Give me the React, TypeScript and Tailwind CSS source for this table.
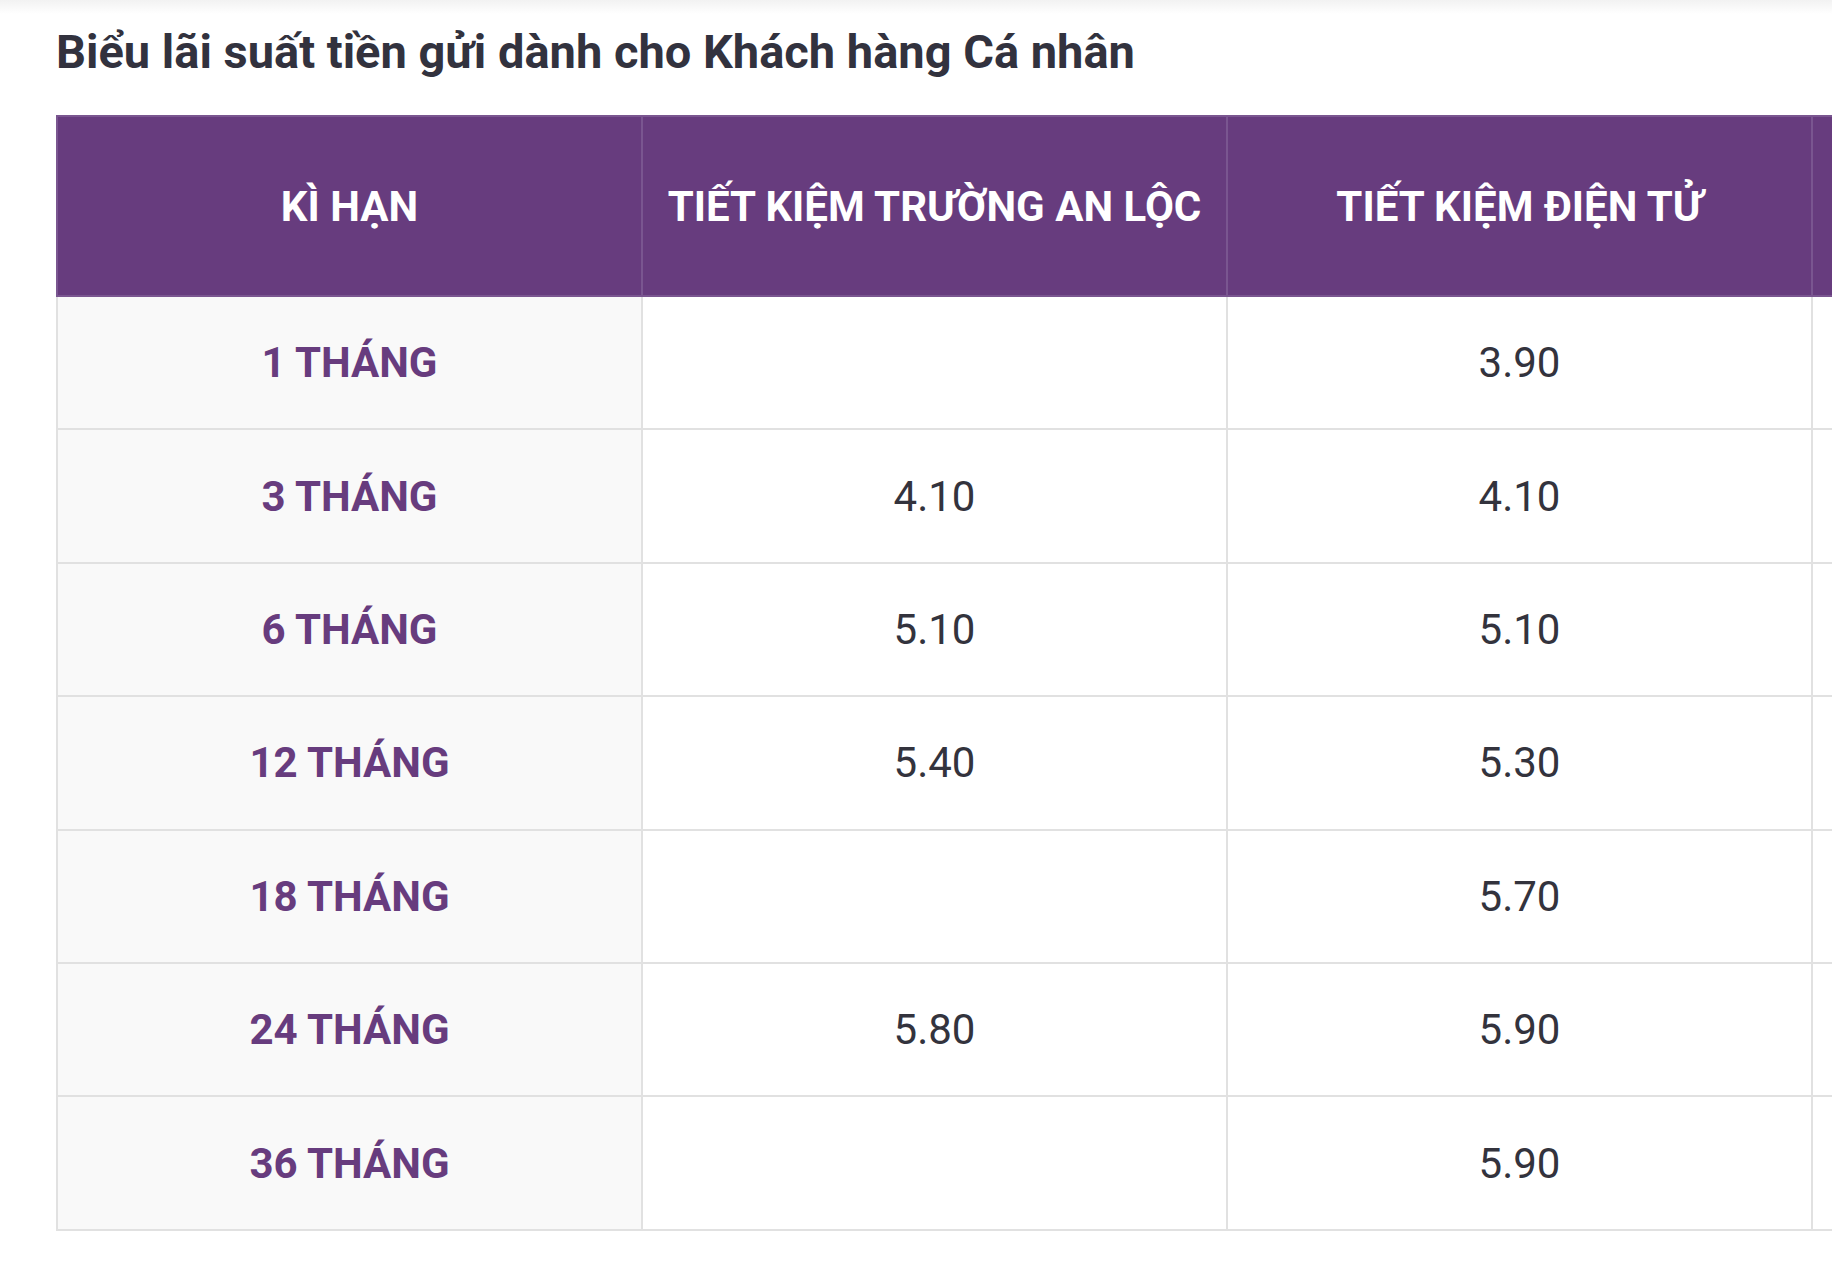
const COLUMNS = ['KÌ HẠN', 'TIẾT KIỆM TRƯỜNG AN LỘC', 'TIẾT KIỆM ĐIỆN TỬ']

const ROWS: [string, string, string][] = [
  ['1 THÁNG', '', '3.90'],
  ['3 THÁNG', '4.10', '4.10'],
  ['6 THÁNG', '5.10', '5.10'],
  ['12 THÁNG', '5.40', '5.30'],
  ['18 THÁNG', '', '5.70'],
  ['24 THÁNG', '5.80', '5.90'],
  ['36 THÁNG', '', '5.90'],
]

export default function App() {
  return (
    <div
      className="w-[1832px] h-[1278px] overflow-hidden bg-white"
      style={{ fontFamily: 'Roboto, "Noto Sans", sans-serif' }}
    >
      <div className="h-[14px] bg-gradient-to-b from-[#f2f2f2] to-white" />
      <h1 className="pl-[56px] pt-[11px] text-[47px] leading-[54px] font-bold text-[#32323e]">
        Biểu lãi suất tiền gửi dành cho Khách hàng Cá nhân
      </h1>
      <div className="pl-[56px] pt-[36px]">
        <table className="w-[2340px] table-fixed border-collapse border-t border-[#cfcfcf]">
          <thead>
            <tr className="h-[180px] bg-[#673c7e]">
              {COLUMNS.map((c) => (
                <th
                  key={c}
                  className="w-[585px] border-2 border-[#7a5690] text-center text-[42px] font-bold text-white"
                >
                  {c}
                </th>
              ))}
              {/* last column runs off the page */}
              <th className="w-[585px] border-2 border-[#7a5690]" />
            </tr>
          </thead>
          <tbody>
            {ROWS.map((r) => (
              <tr key={r[0]} className="h-[133.4px]">
                <td className="border-2 border-[#e1e1e1] bg-[#f9f9f9] text-center text-[42px] font-bold text-[#673c7e]">
                  {r[0]}
                </td>
                {r.slice(1).map((v, i) => (
                  <td
                    key={i}
                    className="border-2 border-[#e1e1e1] bg-white text-center text-[42px] text-[#33333d]"
                  >
                    {v}
                  </td>
                ))}
                <td className="border-2 border-[#e1e1e1] bg-white" />
              </tr>
            ))}
          </tbody>
        </table>
      </div>
    </div>
  )
}
